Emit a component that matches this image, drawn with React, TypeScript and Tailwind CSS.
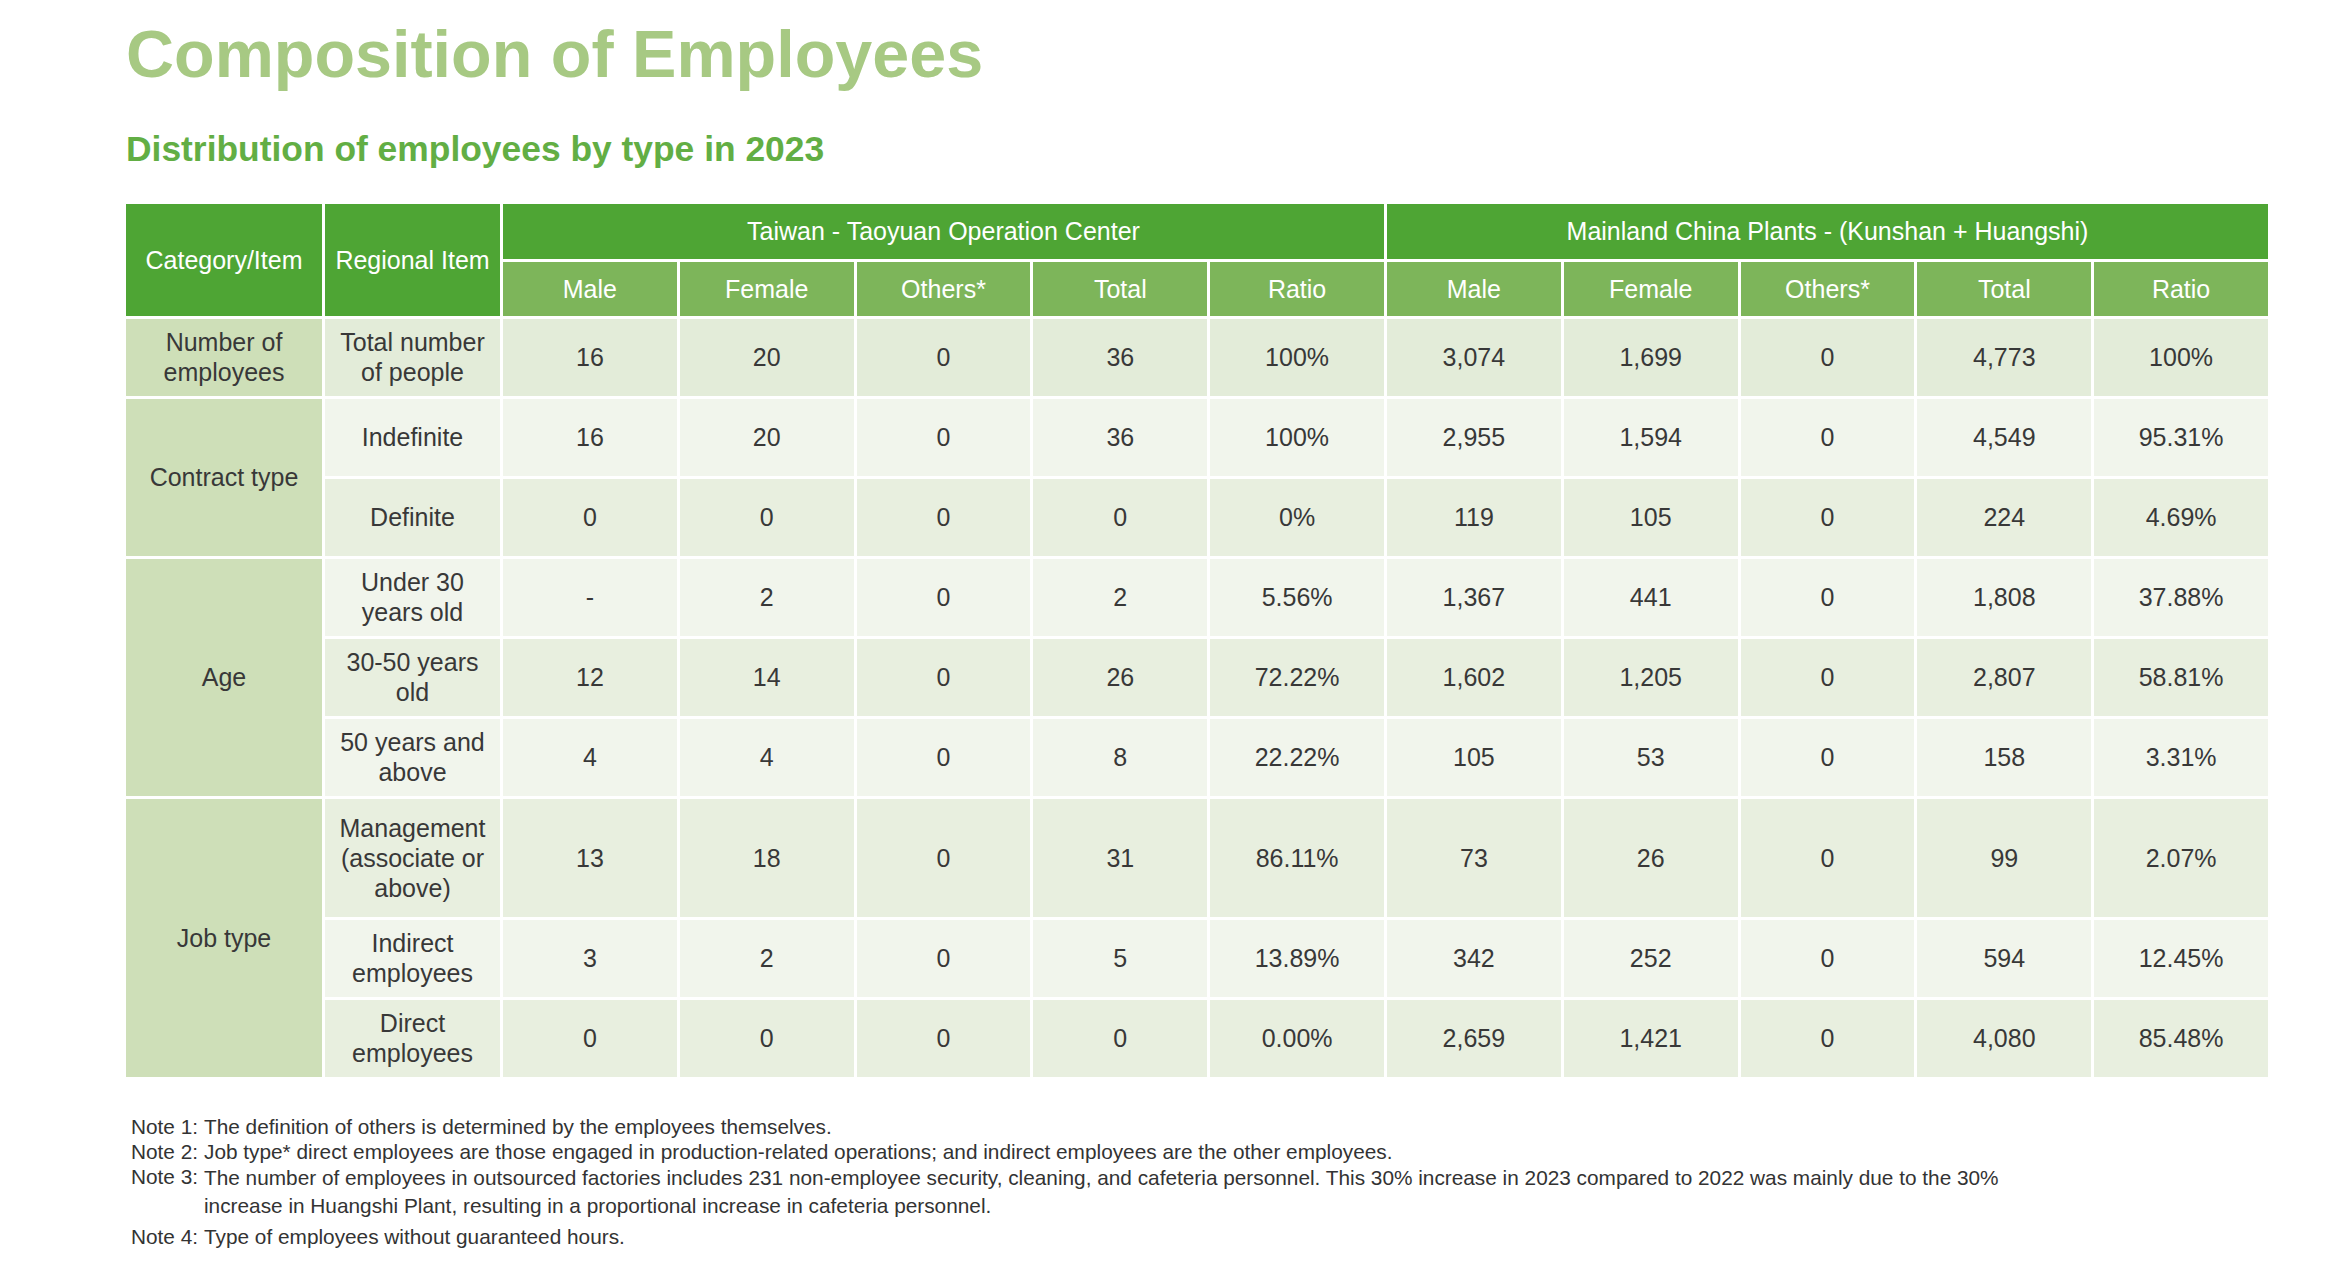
import { FC, Fragment, ReactNode } from "react";

interface Row {
  item: string;
  values: string[];
  tone: "first" | "dark" | "light";
}

interface Group {
  category: string;
  rows: Row[];
}

const groups: Group[] = [
  {
    category: "Number of employees",
    rows: [
      {
        item: "Total number of people",
        values: ["16", "20", "0", "36", "100%", "3,074", "1,699", "0", "4,773", "100%"],
        tone: "first",
      },
    ],
  },
  {
    category: "Contract type",
    rows: [
      {
        item: "Indefinite",
        values: ["16", "20", "0", "36", "100%", "2,955", "1,594", "0", "4,549", "95.31%"],
        tone: "light",
      },
      {
        item: "Definite",
        values: ["0", "0", "0", "0", "0%", "119", "105", "0", "224", "4.69%"],
        tone: "dark",
      },
    ],
  },
  {
    category: "Age",
    rows: [
      {
        item: "Under 30 years old",
        values: ["-", "2", "0", "2", "5.56%", "1,367", "441", "0", "1,808", "37.88%"],
        tone: "light",
      },
      {
        item: "30-50 years old",
        values: ["12", "14", "0", "26", "72.22%", "1,602", "1,205", "0", "2,807", "58.81%"],
        tone: "dark",
      },
      {
        item: "50 years and above",
        values: ["4", "4", "0", "8", "22.22%", "105", "53", "0", "158", "3.31%"],
        tone: "light",
      },
    ],
  },
  {
    category: "Job type",
    rows: [
      {
        item: "Management (associate or above)",
        values: ["13", "18", "0", "31", "86.11%", "73", "26", "0", "99", "2.07%"],
        tone: "dark",
      },
      {
        item: "Indirect employees",
        values: ["3", "2", "0", "5", "13.89%", "342", "252", "0", "594", "12.45%"],
        tone: "light",
      },
      {
        item: "Direct employees",
        values: ["0", "0", "0", "0", "0.00%", "2,659", "1,421", "0", "4,080", "85.48%"],
        tone: "dark",
      },
    ],
  },
];

const subHeads = ["Male", "Female", "Others*", "Total", "Ratio"];

const toneClass = {
  first: "bg-[#e3ecd9]",
  dark: "bg-[#e8efdf]",
  light: "bg-[#f1f5ec]",
};

const rowSpan: Record<number, string> = {
  1: "row-span-1",
  2: "row-span-2",
  3: "row-span-3",
};

const Cell: FC<{ className?: string; children: ReactNode }> = ({ className = "", children }) => (
  <div className={`flex items-center justify-center text-center px-2 ${className}`}>{children}</div>
);

const App: FC = () => {
  return (
    <div className="min-h-screen w-full bg-white pl-[126px] font-['Liberation_Sans',Arial,sans-serif]">
      {/* titles */}
      <h1 className="pt-[21px] text-[66.5px] leading-none font-bold text-[#a7c983]">
        Composition of Employees
      </h1>
      <h2 className="mt-[44px] text-[35.4px] leading-none font-bold text-[#62ae44]">
        Distribution of employees by type in 2023
      </h2>

      {/* table */}
      <div className="mt-[37px] grid w-[2142px] grid-cols-[196px_175px_repeat(10,1fr)] grid-rows-[55px_54px_77px_77px_77px_77px_77px_77px_118px_77px_77px] gap-[3px] text-[25px] leading-[30px] text-[#383838]">
        <Cell className="row-span-2 bg-[#4ea534] text-white">Category/Item</Cell>
        <Cell className="row-span-2 bg-[#4ea534] text-white">Regional Item</Cell>
        <Cell className="col-span-5 bg-[#4ea534] text-white">Taiwan - Taoyuan Operation Center</Cell>
        <Cell className="col-span-5 bg-[#4ea534] text-white">
          Mainland China Plants - (Kunshan + Huangshi)
        </Cell>
        {[...subHeads, ...subHeads].map((h, i) => (
          <Cell key={i} className="bg-[#7db55a] text-white">
            {h}
          </Cell>
        ))}

        {groups.map((g) => (
          <Fragment key={g.category}>
            <Cell className={`${rowSpan[g.rows.length]} col-start-1 bg-[#cedfb8]`}>
              {g.category}
            </Cell>
            {g.rows.map((r) => (
              <Fragment key={r.item}>
                <Cell className={`col-start-2 ${toneClass[r.tone]}`}>{r.item}</Cell>
                {r.values.map((v, i) => (
                  <Cell key={i} className={toneClass[r.tone]}>
                    {v}
                  </Cell>
                ))}
              </Fragment>
            ))}
          </Fragment>
        ))}
      </div>

      {/* notes */}
      <div className="mt-[37px] pl-[5px] text-[20.8px] leading-[25px] text-[#333333]">
        <div className="flex">
          <span className="w-[73px] shrink-0">Note 1:</span>
          <span>The definition of others is determined by the employees themselves.</span>
        </div>
        <div className="flex">
          <span className="w-[73px] shrink-0">Note 2:</span>
          <span>
            Job type* direct employees are those engaged in production-related operations; and
            indirect employees are the other employees.
          </span>
        </div>
        <div className="flex">
          <span className="w-[73px] shrink-0">Note 3:</span>
          <span className="leading-[28px]">
            The number of employees in outsourced factories includes 231 non-employee security,
            cleaning, and cafeteria personnel. This 30% increase in 2023 compared to 2022 was mainly
            due to the 30%
            <br />
            increase in Huangshi Plant, resulting in a proportional increase in cafeteria personnel.
          </span>
        </div>
        <div className="mt-[4px] flex">
          <span className="w-[73px] shrink-0">Note 4:</span>
          <span>Type of employees without guaranteed hours.</span>
        </div>
      </div>
    </div>
  );
};

export default App;
